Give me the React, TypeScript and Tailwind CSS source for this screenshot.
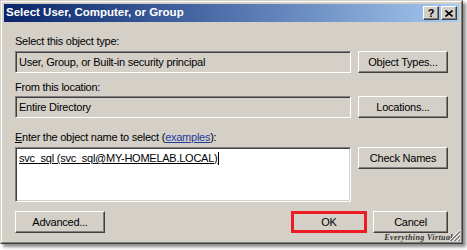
import React from 'react';

const btn =
  'h-[22px] flex items-center justify-center bg-[#d4d0c8] border border-t-white border-l-white border-r-[#404040] border-b-[#404040] shadow-[inset_-1px_-1px_0_#808080] text-[11px] leading-none tracking-[-0.25px] text-black';

const field =
  'bg-[#d4d0c8] border border-t-[#808080] border-l-[#808080] border-r-white border-b-white shadow-[inset_1px_1px_0_#404040,inset_-1px_-1px_0_#d4d0c8]';

function TitleButton({ children }: { children: React.ReactNode }) {
  return (
    <div className="w-[16px] h-[14px] flex items-center justify-center bg-[#d4d0c8] border border-t-white border-l-white border-r-[#404040] border-b-[#404040] shadow-[inset_-1px_-1px_0_#808080]">
      {children}
    </div>
  );
}

function Grip() {
  return (
    <svg width="12" height="12" viewBox="0 0 12 12">
      {[0, 4, 8].map((o) => (
        <g key={o}>
          <line x1={12} y1={o + 1} x2={o + 1} y2={12} stroke="#ffffff" strokeWidth="1" />
          <line x1={12} y1={o + 2} x2={o + 2} y2={12} stroke="#808080" strokeWidth="1" />
          <line x1={12} y1={o + 3} x2={o + 3} y2={12} stroke="#808080" strokeWidth="1" />
        </g>
      ))}
    </svg>
  );
}

export default function App() {
  return (
    <div className="w-[467px] h-[250px] bg-white font-['Liberation_Sans',Arial,sans-serif] text-[11px] tracking-[-0.25px] text-black">
      <div className="relative w-[463px] h-[244px] bg-[#d4d0c8] border border-t-[#d4d0c8] border-l-[#d4d0c8] border-r-[#404040] border-b-[#404040] shadow-[3px_3px_3px_rgba(0,0,0,0.45)]">
        <div className="h-full border border-t-white border-l-white border-r-[#808080] border-b-[#808080] p-[2px] flex flex-col">
          {/* Title bar */}
          <div className="h-[18px] flex items-center justify-between pl-[2px] pr-[2px] bg-linear-to-r from-[#0a246a] via-[#5273ad] to-[#a6caf0]">
            <span className="text-white font-bold text-[11.5px] tracking-normal leading-none">
              Select User, Computer, or Group
            </span>
            <div className="flex gap-[2px]">
              <TitleButton>
                <span className="font-bold text-[11px] leading-none text-black">?</span>
              </TitleButton>
              <TitleButton>
                <svg width="8" height="7" viewBox="0 0 8 7">
                  <path d="M0.5 0.5 L7.5 6.5 M7.5 0.5 L0.5 6.5" stroke="#000" strokeWidth="1.6" />
                </svg>
              </TitleButton>
            </div>
          </div>

          {/* Body */}
          <div className="flex-1 px-[11px] pt-[13px]">
            <div className="h-[13px] leading-[13px]">Select this object type:</div>
            <div className="mt-[3px] flex gap-[7px]">
              <div className={`${field} w-[336px] h-[22px] flex items-center pl-[3px]`}>
                User, Group, or Built-in security principal
              </div>
              <button className={`${btn} w-[90px]`}>Object Types...</button>
            </div>

            <div className="mt-[8px] h-[13px] leading-[13px]">From this location:</div>
            <div className="mt-[2px] flex gap-[7px]">
              <div className={`${field} w-[336px] h-[22px] flex items-center pl-[3px]`}>
                Entire Directory
              </div>
              <button className={`${btn} w-[90px]`}>Locations...</button>
            </div>

            <div className="mt-[13px] h-[13px] leading-[13px]">
              <span className="underline">E</span>nter the object name to select (
              <span className="text-[#1f3b9c] underline">examples</span>):
            </div>
            <div className="mt-[3px] flex gap-[7px] items-start">
              <div className="w-[336px] h-[55px] bg-white border border-t-[#808080] border-l-[#808080] border-r-white border-b-white shadow-[inset_1px_1px_0_#404040,inset_-1px_-1px_0_#d4d0c8] pl-[3px] pt-[2px]">
                <span className="inline-flex items-end leading-[13px]">
                  <span className="underline">svc_sql (svc_sql@MY-HOMELAB.LOCAL)</span>
                  <span className="inline-block w-[1px] h-[13px] bg-black ml-[1px]" />
                </span>
              </div>
              <button className={`${btn} w-[90px]`}>Check Names</button>
            </div>

            <div className="mt-[9px] flex justify-between">
              <button className={`${btn} w-[90px]`}>Advanced...</button>
              <div className="flex gap-[6px]">
                <div className="relative">
                  <button className={`${btn} w-[76px]`}>OK</button>
                  <div className="absolute inset-0 border-[3px] border-[#ec1c24]" />
                </div>
                <button className={`${btn} w-[75px]`}>Cancel</button>
              </div>
            </div>
          </div>
        </div>

        {/* watermark and grip */}
        <span className="absolute right-[9px] bottom-[1px] font-['Liberation_Serif',serif] italic font-bold text-[8px] leading-none text-[#333] tracking-[0.4px]">
          Everything Virtual
        </span>
        <div className="absolute right-[2px] bottom-[2px]">
          <Grip />
        </div>
      </div>
    </div>
  );
}
